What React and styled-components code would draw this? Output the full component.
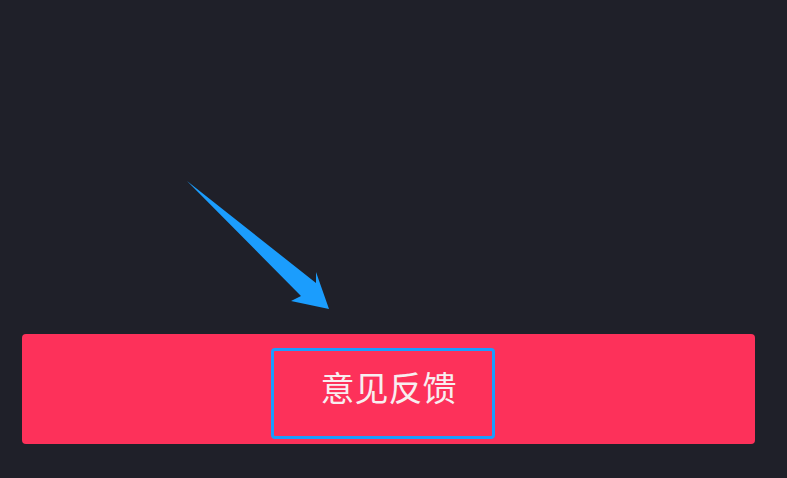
import React from 'react'
import styled, { createGlobalStyle } from 'styled-components'

const GlobalStyle = createGlobalStyle`
  html, body, #root {
    margin: 0;
    height: 100%;
  }
  body {
    background-color: #1f2029;
    font-family: "Noto Sans CJK SC", "Noto Sans", sans-serif;
  }
`

function App () {
  return (
    <Page>
      <GlobalStyle />
      {/**pointer arrow */}
      <Arrow viewBox='0 0 787 478'>
        <polygon
          points='187,181 316,283 316,272 329,309 291,301 301,296'
          fill='#1b9dfd'
        />
      </Arrow>
      <Footer>
        <FeedbackButton>
          <Label>意见反馈</Label>
        </FeedbackButton>
      </Footer>
    </Page>
  )
}

export default App

const Page = styled.div`
  position: relative;
  height: 100%;
  display: flex;
  flex-direction: column;
  justify-content: flex-end;
`

const Arrow = styled.svg`
  position: absolute;
  top: 0;
  left: 0;
  width: 787px;
  height: 478px;
  pointer-events: none;
`

const Footer = styled.div`
  padding: 0 32px 34px 22px;
`

const FeedbackButton = styled.div`
  height: 110px;
  border-radius: 4px;
  background-color: #fd315a;
  display: flex;
  align-items: center;
  justify-content: center;
`

const Label = styled.span`
  position: relative;
  top: -2px;
  font-size: 34px;
  line-height: 34px;
  color: #f8eef0;
  &::before {
    content: '';
    position: absolute;
    left: -50px;
    right: -38px;
    top: -22px;
    bottom: -35px;
    border: 3px solid #1b9dfd;
    border-radius: 4px;
  }
`
